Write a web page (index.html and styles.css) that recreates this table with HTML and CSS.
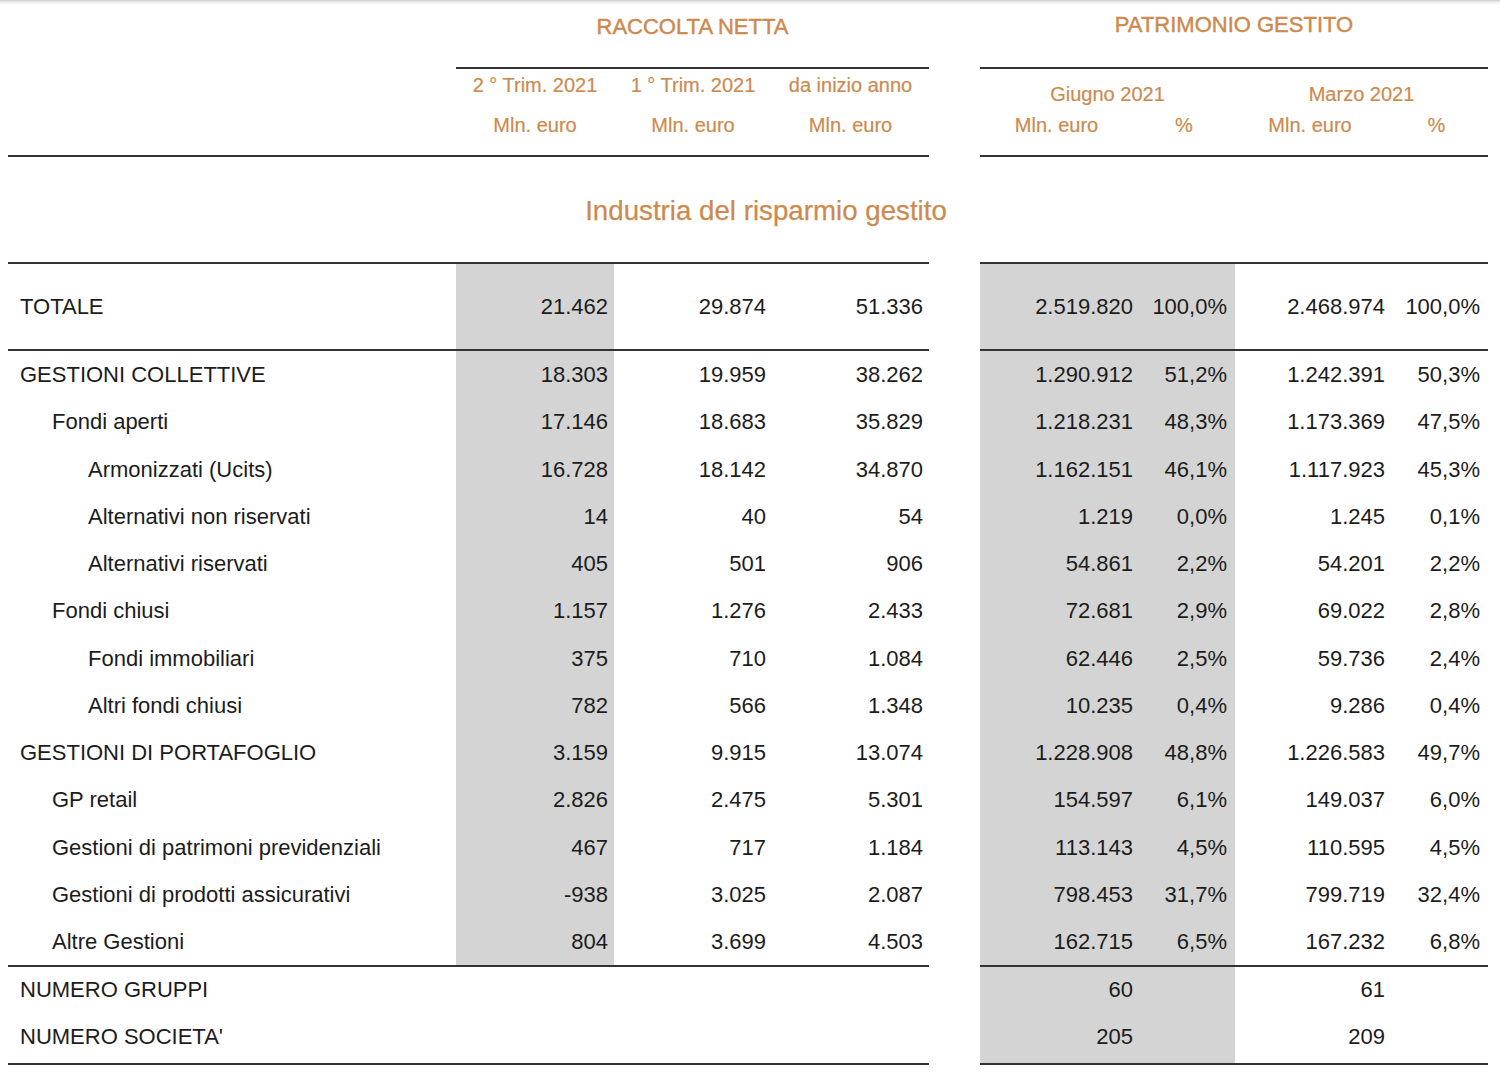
FILE: index.html
```html
<!DOCTYPE html>
<html lang="it">
<head>
<meta charset="utf-8">
<title>Industria del risparmio gestito</title>
<link rel="stylesheet" href="styles.css">
</head>
<body>
<div class="sheet">
  <!-- titles -->
  <div class="cell h-title"></div>
  <div class="cell h-title title t-left">RACCOLTA NETTA</div>
  <div class="cell h-title"></div>
  <div class="cell h-title title t-right">PATRIMONIO GESTITO</div>

  <!-- rule -->
  <div class="cell"></div>
  <div class="rule span3"></div>
  <div class="cell"></div>
  <div class="rule span4"></div>

  <!-- header row 1 -->
  <div class="cell h-sub1"></div>
  <div class="cell h-sub1 hd">2 ° Trim. 2021</div>
  <div class="cell h-sub1 hd">1 ° Trim. 2021</div>
  <div class="cell h-sub1 hd">da inizio anno</div>
  <div class="cell h-sub1"></div>
  <div class="cell h-sub1 hd hd-r span2">Giugno 2021</div>
  <div class="cell h-sub1 hd hd-r span2">Marzo 2021</div>

  <!-- header row 2 -->
  <div class="cell h-sub2"></div>
  <div class="cell h-sub2 hd2">Mln. euro</div>
  <div class="cell h-sub2 hd2">Mln. euro</div>
  <div class="cell h-sub2 hd2">Mln. euro</div>
  <div class="cell h-sub2"></div>
  <div class="cell h-sub2 hd2">Mln. euro</div>
  <div class="cell h-sub2 hd2">%</div>
  <div class="cell h-sub2 hd2">Mln. euro</div>
  <div class="cell h-sub2 hd2">%</div>

  <!-- rule -->
  <div class="rule span4"></div>
  <div class="cell"></div>
  <div class="rule span4"></div>

  <!-- section title -->
  <div class="cell section">Industria del risparmio gestito</div>

  <!-- rule -->
  <div class="rule span4"></div>
  <div class="cell"></div>
  <div class="rule span4"></div>

  <!-- TOTALE -->
  <div class="cell r-tot lbl">TOTALE</div>
  <div class="cell r-tot num shade">21.462</div>
  <div class="cell r-tot num">29.874</div>
  <div class="cell r-tot num">51.336</div>
  <div class="cell r-tot"></div>
  <div class="cell r-tot val shade">2.519.820</div>
  <div class="cell r-tot pct shade">100,0%</div>
  <div class="cell r-tot val">2.468.974</div>
  <div class="cell r-tot pct">100,0%</div>

  <!-- rule -->
  <div class="rule span4"></div>
  <div class="cell"></div>
  <div class="rule span4"></div>

  <!-- body rows -->
  <div class="cell row lbl">GESTIONI COLLETTIVE</div>
  <div class="cell row num shade">18.303</div>
  <div class="cell row num">19.959</div>
  <div class="cell row num">38.262</div>
  <div class="cell row"></div>
  <div class="cell row val shade">1.290.912</div>
  <div class="cell row pct shade">51,2%</div>
  <div class="cell row val">1.242.391</div>
  <div class="cell row pct">50,3%</div>

  <div class="cell row lbl l1">Fondi aperti</div>
  <div class="cell row num shade">17.146</div>
  <div class="cell row num">18.683</div>
  <div class="cell row num">35.829</div>
  <div class="cell row"></div>
  <div class="cell row val shade">1.218.231</div>
  <div class="cell row pct shade">48,3%</div>
  <div class="cell row val">1.173.369</div>
  <div class="cell row pct">47,5%</div>

  <div class="cell row lbl l2">Armonizzati (Ucits)</div>
  <div class="cell row num shade">16.728</div>
  <div class="cell row num">18.142</div>
  <div class="cell row num">34.870</div>
  <div class="cell row"></div>
  <div class="cell row val shade">1.162.151</div>
  <div class="cell row pct shade">46,1%</div>
  <div class="cell row val">1.117.923</div>
  <div class="cell row pct">45,3%</div>

  <div class="cell row lbl l2">Alternativi non riservati</div>
  <div class="cell row num shade">14</div>
  <div class="cell row num">40</div>
  <div class="cell row num">54</div>
  <div class="cell row"></div>
  <div class="cell row val shade">1.219</div>
  <div class="cell row pct shade">0,0%</div>
  <div class="cell row val">1.245</div>
  <div class="cell row pct">0,1%</div>

  <div class="cell row lbl l2">Alternativi riservati</div>
  <div class="cell row num shade">405</div>
  <div class="cell row num">501</div>
  <div class="cell row num">906</div>
  <div class="cell row"></div>
  <div class="cell row val shade">54.861</div>
  <div class="cell row pct shade">2,2%</div>
  <div class="cell row val">54.201</div>
  <div class="cell row pct">2,2%</div>

  <div class="cell row lbl l1">Fondi chiusi</div>
  <div class="cell row num shade">1.157</div>
  <div class="cell row num">1.276</div>
  <div class="cell row num">2.433</div>
  <div class="cell row"></div>
  <div class="cell row val shade">72.681</div>
  <div class="cell row pct shade">2,9%</div>
  <div class="cell row val">69.022</div>
  <div class="cell row pct">2,8%</div>

  <div class="cell row lbl l2">Fondi immobiliari</div>
  <div class="cell row num shade">375</div>
  <div class="cell row num">710</div>
  <div class="cell row num">1.084</div>
  <div class="cell row"></div>
  <div class="cell row val shade">62.446</div>
  <div class="cell row pct shade">2,5%</div>
  <div class="cell row val">59.736</div>
  <div class="cell row pct">2,4%</div>

  <div class="cell row lbl l2">Altri fondi chiusi</div>
  <div class="cell row num shade">782</div>
  <div class="cell row num">566</div>
  <div class="cell row num">1.348</div>
  <div class="cell row"></div>
  <div class="cell row val shade">10.235</div>
  <div class="cell row pct shade">0,4%</div>
  <div class="cell row val">9.286</div>
  <div class="cell row pct">0,4%</div>

  <div class="cell row lbl">GESTIONI DI PORTAFOGLIO</div>
  <div class="cell row num shade">3.159</div>
  <div class="cell row num">9.915</div>
  <div class="cell row num">13.074</div>
  <div class="cell row"></div>
  <div class="cell row val shade">1.228.908</div>
  <div class="cell row pct shade">48,8%</div>
  <div class="cell row val">1.226.583</div>
  <div class="cell row pct">49,7%</div>

  <div class="cell row lbl l1">GP retail</div>
  <div class="cell row num shade">2.826</div>
  <div class="cell row num">2.475</div>
  <div class="cell row num">5.301</div>
  <div class="cell row"></div>
  <div class="cell row val shade">154.597</div>
  <div class="cell row pct shade">6,1%</div>
  <div class="cell row val">149.037</div>
  <div class="cell row pct">6,0%</div>

  <div class="cell row lbl l1">Gestioni di patrimoni previdenziali</div>
  <div class="cell row num shade">467</div>
  <div class="cell row num">717</div>
  <div class="cell row num">1.184</div>
  <div class="cell row"></div>
  <div class="cell row val shade">113.143</div>
  <div class="cell row pct shade">4,5%</div>
  <div class="cell row val">110.595</div>
  <div class="cell row pct">4,5%</div>

  <div class="cell row lbl l1">Gestioni di prodotti assicurativi</div>
  <div class="cell row num shade">-938</div>
  <div class="cell row num">3.025</div>
  <div class="cell row num">2.087</div>
  <div class="cell row"></div>
  <div class="cell row val shade">798.453</div>
  <div class="cell row pct shade">31,7%</div>
  <div class="cell row val">799.719</div>
  <div class="cell row pct">32,4%</div>

  <div class="cell row lbl l1">Altre Gestioni</div>
  <div class="cell row num shade">804</div>
  <div class="cell row num">3.699</div>
  <div class="cell row num">4.503</div>
  <div class="cell row"></div>
  <div class="cell row val shade">162.715</div>
  <div class="cell row pct shade">6,5%</div>
  <div class="cell row val">167.232</div>
  <div class="cell row pct">6,8%</div>

  <!-- rule -->
  <div class="rule span4"></div>
  <div class="cell"></div>
  <div class="rule span4"></div>

  <!-- counts -->
  <div class="cell count lbl">NUMERO GRUPPI</div>
  <div class="cell count"></div>
  <div class="cell count"></div>
  <div class="cell count"></div>
  <div class="cell count"></div>
  <div class="cell count val shade">60</div>
  <div class="cell count shade"></div>
  <div class="cell count val">61</div>
  <div class="cell count"></div>

  <div class="cell count last lbl">NUMERO SOCIETA'</div>
  <div class="cell count last"></div>
  <div class="cell count last"></div>
  <div class="cell count last"></div>
  <div class="cell count last"></div>
  <div class="cell count last val shade">205</div>
  <div class="cell count last shade"></div>
  <div class="cell count last val">209</div>
  <div class="cell count last"></div>

  <!-- rule -->
  <div class="rule span4"></div>
  <div class="cell"></div>
  <div class="rule span4"></div>
</div>
</body>
</html>
```

FILE: styles.css
```css
html, body {
  margin: 0;
  padding: 0;
}

body {
  background: #ffffff linear-gradient(to bottom, #c9c9c9 0, #eeeeee 2px, #ffffff 5px) no-repeat;
  background-size: 100% 6px;
  font-family: "Liberation Sans", Arial, sans-serif;
  color: #1c1c1c;
  width: 1500px;
  height: 1074px;
  overflow: hidden;
}

.sheet {
  display: grid;
  grid-template-columns: 448px 158px 158px 157px 51px 153px 102px 150px 103px;
  width: 1480px;
  margin-left: 8px;
}

.cell {
  box-sizing: border-box;
  white-space: nowrap;
}

.span2 { grid-column: span 2; }
.span3 { grid-column: span 3; }
.span4 { grid-column: span 4; }

/* titles */
.h-title { height: 67px; }

.title {
  color: #cd8a4e;
  font-size: 22px;
  line-height: 24px;
  text-align: center;
  -webkit-text-stroke: 0.45px #cd8a4e;
}

.t-left {
  grid-column: span 3;
  padding-top: 15px;
}

.t-right {
  grid-column: span 4;
  padding-top: 13px;
}

/* rules */
.rule {
  height: 2px;
  background: #333333;
}

/* sub headers */
.h-sub1 { height: 36px; }
.h-sub2 { height: 50px; }

.hd, .hd2 {
  color: #cd8a4e;
  font-size: 20px;
  line-height: 22px;
  text-align: center;
  -webkit-text-stroke: 0.2px #cd8a4e;
}

.hd { padding-top: 5px; }
.hd-r { padding-top: 14px; }
.hd2 { padding-top: 9px; }

/* section title */
.section {
  grid-column: 1 / -1;
  height: 105px;
  padding-top: 38px;
  padding-left: 36px;
  text-align: center;
  color: #cd8a4e;
  font-size: 27.7px;
  line-height: 32px;
  -webkit-text-stroke: 0.25px #cd8a4e;
}

/* data rows */
.r-tot {
  height: 85px;
  line-height: 85px;
  font-size: 22px;
}

.row {
  height: 47.25px;
  line-height: 47px;
  font-size: 22px;
}

.count {
  height: 47px;
  line-height: 45px;
  font-size: 22px;
}

.count.last {
  height: 49px;
}

.lbl { padding-left: 12px; }
.lbl.l1 { padding-left: 44px; }
.lbl.l2 { padding-left: 80px; }

.num {
  text-align: right;
  padding-right: 6px;
}

.val {
  text-align: right;
  padding-right: 0;
}

.pct {
  text-align: right;
  padding-right: 8px;
}

.shade { background: #d4d4d4; }
```
